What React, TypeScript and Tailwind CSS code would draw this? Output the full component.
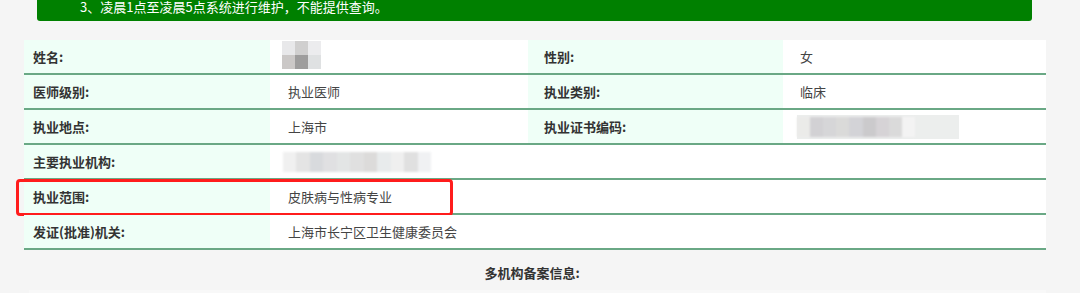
import React from "react"

const font = { fontFamily: '"Noto Sans CJK SC", "Noto Sans", sans-serif' }

type Cell = { label: string; value?: React.ReactNode }

function NameBlur() {
  return (
    <div className="grid grid-cols-3 w-[39px] blur-[0.6px]">
      <div className="h-[14px] bg-[#e8e8ea]" />
      <div className="h-[14px] bg-[#d0cfcf]" />
      <div className="h-[14px] bg-[#ececee]" />
      <div className="h-[14px] bg-[#cbc8c7]" />
      <div className="h-[14px] bg-[#9e9d9d]" />
      <div className="h-[14px] bg-[#dfe1e2]" />
    </div>
  )
}

function StripBlur({ colors, w }: { colors: string[]; w: string }) {
  return (
    <div className={`flex h-[20px] blur-[1px] ${w}`}>
      {colors.map((c, i) => (
        <div key={i} className="flex-1" style={{ background: c }} />
      ))}
    </div>
  )
}

function Label({ children, wide }: { children: React.ReactNode; wide?: boolean }) {
  return (
    <div
      className={`flex items-center bg-[#effff7] font-bold text-[#333] ${
        wide ? "w-[255px] pl-[16px]" : "w-[246px] pl-[9px]"
      }`}
    >
      {children}
    </div>
  )
}

function Value({ children, className = "" }: { children?: React.ReactNode; className?: string }) {
  return <div className={`flex items-center bg-white text-[#444] ${className}`}>{children}</div>
}

function Row({ children, className = "" }: { children: React.ReactNode; className?: string }) {
  return (
    <div className={`flex h-[35px] border-b-2 border-[#6aa885] text-[13px] ${className}`}>{children}</div>
  )
}

function PairRow({ left, right }: { left: Cell; right: Cell }) {
  return (
    <Row>
      <Label>{left.label}</Label>
      <Value className="w-[258px] pl-[18px]">{left.value}</Value>
      <Label wide>{right.label}</Label>
      <Value className="flex-1 pl-[17px]">{right.value}</Value>
    </Row>
  )
}

function WideRow({ label, value }: Cell) {
  return (
    <Row className="relative">
      <Label>{label}</Label>
      <Value className="flex-1 pl-[18px]">{value}</Value>
    </Row>
  )
}

export default function App() {
  return (
    <div className="w-[1080px] h-[293px] bg-[#f5f5f5] overflow-hidden" style={font}>
      {/* notice banner, scrolled partly out of view */}
      <div className="mx-[37px] w-[995px] h-[21px] overflow-hidden rounded-b-[3px] bg-[#008000] text-white text-[13px]">
        <p className="-mt-[3px] pl-[43px] leading-[20px]">3、凌晨1点至凌晨5点系统进行维护，不能提供查询。</p>
      </div>

      <div className="mt-[19px] ml-[24px] w-[1022px]">
        <PairRow
          left={{ label: "姓名:", value: <div className="-mt-[4px] -ml-[6px]"><NameBlur /></div> }}
          right={{ label: "性别:", value: "女" }}
        />
        <PairRow
          left={{ label: "医师级别:", value: "执业医师" }}
          right={{ label: "执业类别:", value: "临床" }}
        />
        <PairRow
          left={{ label: "执业地点:", value: "上海市" }}
          right={{
            label: "执业证书编码:",
            value: (
              <div className="-ml-[3px] bg-[#eceeed] py-[2px] w-[162px]">
                <StripBlur
                  w="w-[118px]"
                  colors={["#ebebe9", "#d2d1d4", "#d6d6d8", "#dadad9", "#d3d3d7", "#cbcacc", "#d6d3d6", "#dadada", "#f3f3f3"]}
                />
              </div>
            ),
          }}
        />
        <WideRow
          label="主要执业机构:"
          value={
            <StripBlur
              w="w-[148px] -ml-[5px]"
              colors={["#f0f0f0", "#e4e4e4", "#d8dadd", "#e0e0e2", "#e3e5e5", "#e0e0e0", "#dcdbda", "#e8ebec", "#efefef", "#e0e0e0", "#f0f1f3"]}
            />
          }
        />
        <div className="relative">
          <WideRow label="执业范围:" value="皮肤病与性病专业" />
          <div className="absolute -left-[8px] -top-[1px] w-[437px] h-[37px] rounded-[4px] border-[3px] border-[#ff1c1c]" />
        </div>
        <WideRow label="发证(批准)机关:" value="上海市长宁区卫生健康委员会" />

        <div className="h-[32px] flex items-end justify-center pr-[6px] text-[13px] font-bold text-[#333]">
          多机构备案信息:
        </div>
        <div className="mt-[8px] ml-[5px] h-[20px] bg-[#f8f8f8]" />
      </div>
    </div>
  )
}
